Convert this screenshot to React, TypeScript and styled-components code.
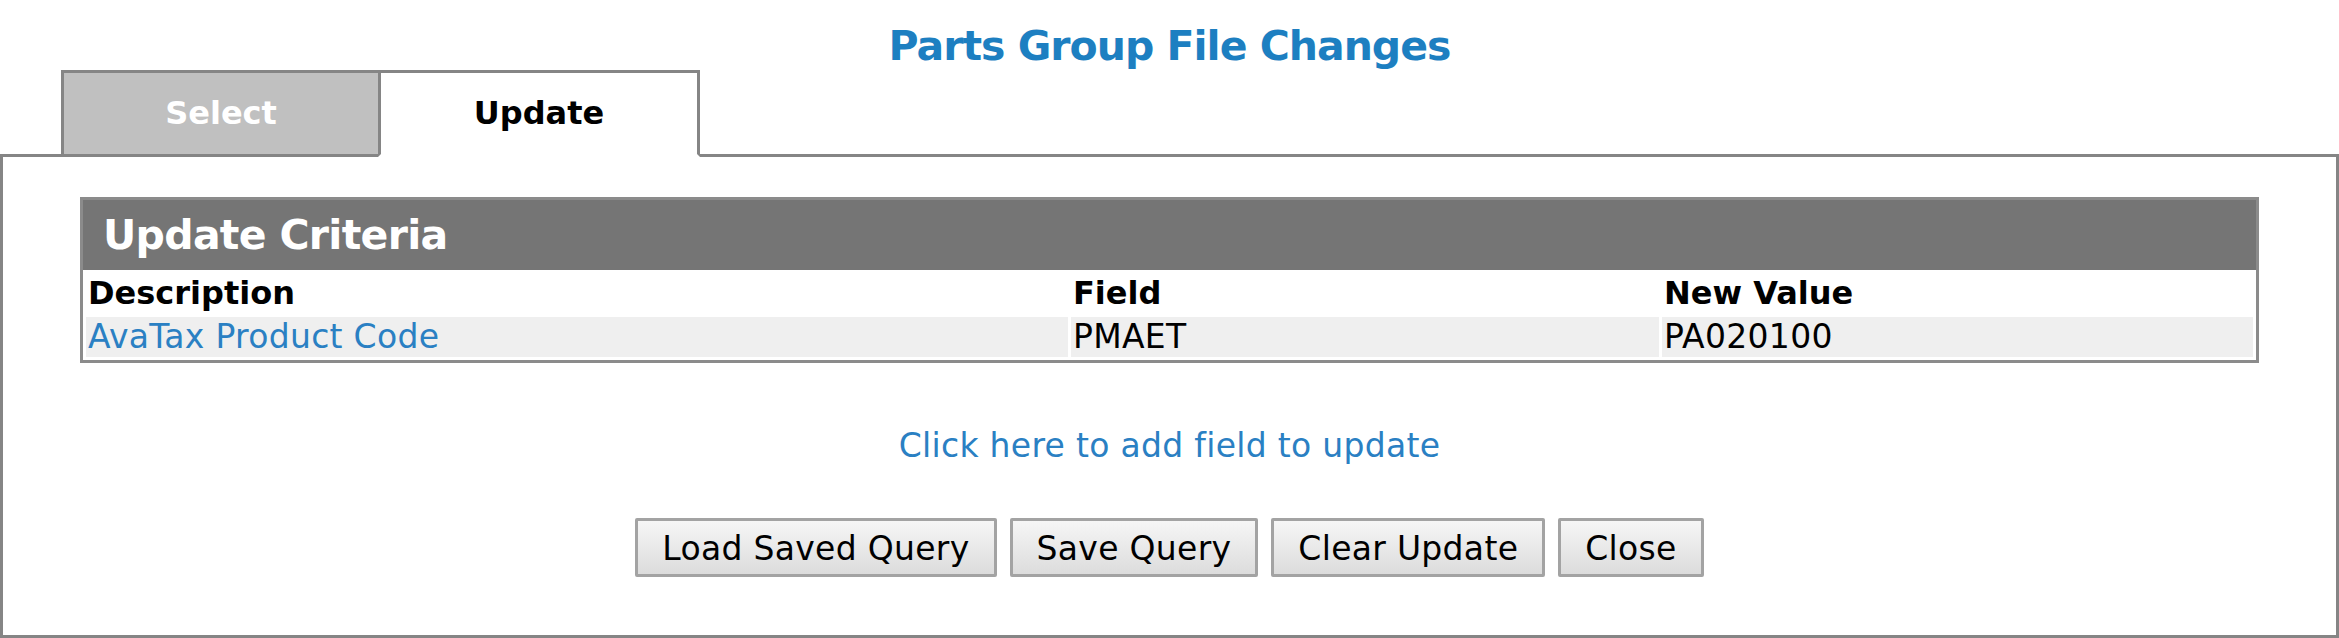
import React from 'react';
import styled, { createGlobalStyle } from 'styled-components';

const GlobalStyle = createGlobalStyle`
  html, body {
    margin: 0;
    padding: 0;
    background: #fff;
  }
  body {
    font-family: "DejaVu Sans", Verdana, sans-serif;
  }
`

const Page = styled.div`
  width: 2339px;
  height: 638px;
  display: flex;
  flex-direction: column;
  box-sizing: border-box;
`

const Title = styled.h1`
  margin: 0;
  padding-top: 22px;
  height: 48px;
  line-height: 48px;
  text-align: center;
  font-size: 41px;
  font-weight: bold;
  letter-spacing: -1px;
  color: #1d7fc1;
`

const TabRow = styled.div`
  display: flex;
  padding-left: 61px;
  margin-bottom: -3px;
  position: relative;
  z-index: 1;
`

const Tab = styled.div<{ $active?: boolean }>`
  box-sizing: border-box;
  width: ${(props) => props.$active ? '322px' : '320px'};
  height: 87px;
  margin-left: ${(props) => props.$active ? '-3px' : '0'};
  border: 3px solid #858585;
  border-bottom-color: ${(props) => props.$active ? '#fff' : '#858585'};
  background: ${(props) => props.$active ? '#fff' : '#c0c0c0'};
  color: ${(props) => props.$active ? '#000' : '#fff'};
  display: flex;
  align-items: center;
  justify-content: center;
  padding-bottom: 2px;
  font-size: 32px;
  font-weight: bold;
`

const Panel = styled.div`
  flex: 1;
  box-sizing: border-box;
  border: 3px solid #858585;
  padding: 40px 77px 0;
  display: flex;
  flex-direction: column;
`

const CriteriaTable = styled.div`
  border: 3px solid #8b8b8b;
`

const TableCaption = styled.div`
  height: 70px;
  background: #757575;
  color: #fff;
  font-size: 41px;
  font-weight: bold;
  letter-spacing: -0.7px;
  line-height: 70px;
  padding-left: 20px;
`

const Grid = styled.div`
  display: grid;
  grid-template-columns: 982px 588px 1fr;
  gap: 3px;
  padding: 3px;
`

const Cell = styled.div<{ $head?: boolean; $link?: boolean }>`
  height: ${(props) => props.$head ? '41px' : '40px'};
  line-height: ${(props) => props.$head ? '41px' : '40px'};
  padding-left: 2px;
  background: ${(props) => props.$head ? '#fff' : '#efefef'};
  color: ${(props) => props.$link ? '#2a80c3' : '#000'};
  font-size: ${(props) => props.$head ? '32px' : '33px'};
  font-weight: ${(props) => props.$head ? 'bold' : 'normal'};
  letter-spacing: ${(props) => props.$head ? '0' : '0.3px'};
  white-space: nowrap;
`

const AddLink = styled.a`
  display: block;
  margin-top: 63px;
  height: 40px;
  line-height: 40px;
  text-align: center;
  font-size: 33px;
  letter-spacing: 0.3px;
  color: #2a80c3;
  text-decoration: none;
  cursor: pointer;
`

const ButtonBar = styled.div`
  display: flex;
  justify-content: center;
  gap: 13px;
  margin-top: 52px;
`

const Button = styled.button`
  box-sizing: border-box;
  height: 59px;
  padding: 2px 24px 0;
  border: 3px solid #a3a3a3;
  border-radius: 2px;
  background: linear-gradient(#f6f6f6, #dcdcdc);
  font-family: "DejaVu Sans", Verdana, sans-serif;
  font-size: 33px;
  letter-spacing: 0.3px;
  color: #000;
  cursor: pointer;
`

const rows = [
  { description: 'AvaTax Product Code', field: 'PMAET', value: 'PA020100' },
]

function App() {
  return (
    <Page>
      <GlobalStyle />
      <Title>Parts Group File Changes</Title>
      <TabRow>
        <Tab>Select</Tab>
        <Tab $active>Update</Tab>
      </TabRow>
      <Panel>
        <CriteriaTable>
          <TableCaption>Update Criteria</TableCaption>
          <Grid>
            <Cell $head>Description</Cell>
            <Cell $head>Field</Cell>
            <Cell $head>New Value</Cell>
            {rows.map((row) => (
              <React.Fragment key={row.field}>
                <Cell $link>{row.description}</Cell>
                <Cell>{row.field}</Cell>
                <Cell>{row.value}</Cell>
              </React.Fragment>
            ))}
          </Grid>
        </CriteriaTable>
        <AddLink>Click here to add field to update</AddLink>
        <ButtonBar>
          <Button>Load Saved Query</Button>
          <Button>Save Query</Button>
          <Button>Clear Update</Button>
          <Button>Close</Button>
        </ButtonBar>
      </Panel>
    </Page>
  );
}

export default App;
